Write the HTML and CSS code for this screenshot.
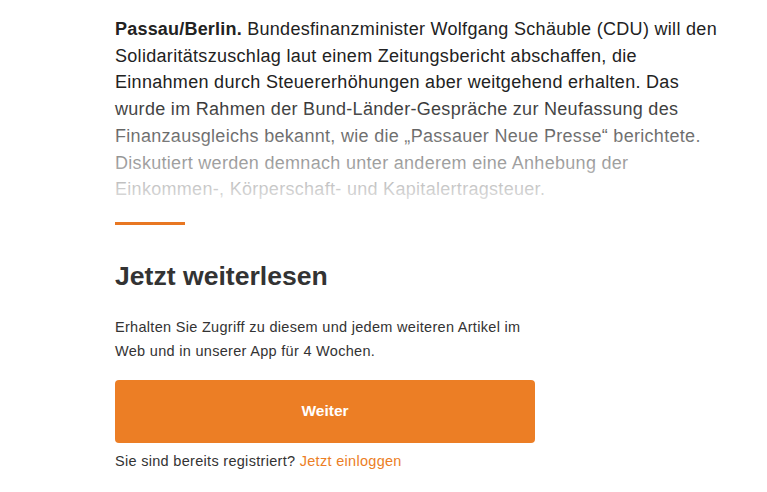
FILE: index.html
```html
<!DOCTYPE html>
<html lang="de">
<head>
  <meta charset="UTF-8">
  <meta name="viewport" content="width=device-width, initial-scale=1.0">
  <title>Jetzt weiterlesen</title>
  <link rel="stylesheet" href="styles.css">
</head>
<body>
  <div class="artikel">
    <p class="teaser">
      <strong>Passau/Berlin.</strong> Bundesfinanzminister Wolfgang Schäuble (CDU) will den<br>
      Solidaritätszuschlag laut einem Zeitungsbericht abschaffen, die<br>
      Einnahmen durch Steuererhöhungen aber weitgehend erhalten. Das<br>
      wurde im Rahmen der Bund-Länder-Gespräche zur Neufassung des<br>
      Finanzausgleichs bekannt, wie die „Passauer Neue Presse“ berichtete.<br>
      Diskutiert werden demnach unter anderem eine Anhebung der<br>
      Einkommen-, Körperschaft- und Kapitalertragsteuer.
    </p>

    <div class="paywall">
      <div class="linie"></div>
      <h2>Jetzt weiterlesen</h2>
      <p class="info">Erhalten Sie Zugriff zu diesem und jedem weiteren Artikel im<br>Web und in unserer App für 4 Wochen.</p>
      <button class="weiter">Weiter</button>
      <p class="login">Sie sind bereits registriert? <a href="#">Jetzt einloggen</a></p>
    </div>
  </div>
</body>
</html>
```

FILE: styles.css
```css
body {
  margin: 0;
  background-color: #fff;
  font-family: "Liberation Sans", Arial, sans-serif;
  color: #222;
}
.artikel {
  width: 640px;
  padding: 16px 0 0 115px;
}
.teaser {
  position: relative;
  margin: 0;
  font-size: 18px;
  line-height: 26.7px;
  letter-spacing: 0.3px;
  white-space: nowrap;
}
.teaser strong {
  font-weight: bold;
  letter-spacing: 0.2px;
}
.teaser::after {
  content: "";
  position: absolute;
  left: 0;
  right: 0;
  top: 0;
  bottom: 0;
  background: linear-gradient(to bottom, rgba(255,255,255,0) 40%, rgba(255,255,255,0.88) 100%);
}
.paywall {
  width: 420px;
}
.linie {
  width: 70px;
  height: 3px;
  margin-top: 19px;
  background-color: #e87722;
}
h2 {
  margin: 36px 0 0 0;
  font-size: 26.6px;
  font-weight: bold;
  color: #333;
}
.info {
  margin: 23px 0 0 0;
  font-size: 14.5px;
  line-height: 24px;
  letter-spacing: 0.3px;
  color: #333;
}
.weiter {
  display: block;
  width: 100%;
  height: 63px;
  margin-top: 17px;
  background-color: #ec7e25;
  color: #fff;
  border: none;
  border-radius: 4px;
  font-family: inherit;
  font-size: 15.5px;
  font-weight: bold;
  cursor: pointer;
}
.login {
  margin: 8px 0 0 0;
  font-size: 14.5px;
  line-height: 20px;
  letter-spacing: 0.3px;
  color: #333;
}
.login a {
  color: #ec7e25;
  text-decoration: none;
}
```
